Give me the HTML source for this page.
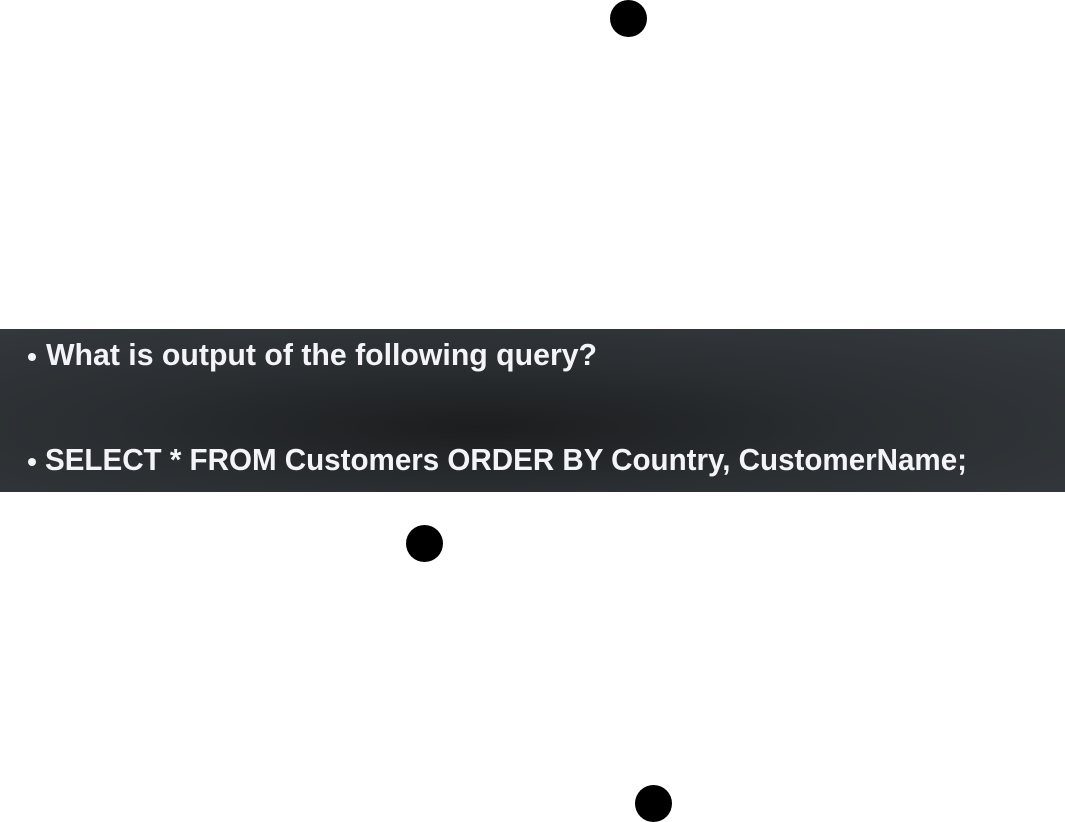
<!DOCTYPE html>
<html><head><style>
html,body{margin:0;padding:0;width:1065px;height:822px;background:#fff;overflow:hidden;position:relative}
.dot{position:absolute;width:37px;height:37px;border-radius:50%;background:#000}
.band{position:absolute;left:0;top:329px;width:1065px;height:163px;background:radial-gradient(ellipse at 45% 60%,#1c1d1f 0%,#2a2e31 45%,#353a3e 100%)}
.t{position:absolute;color:#f4f4f8;font-family:"Liberation Sans",sans-serif;font-weight:bold;font-size:31px;white-space:nowrap;transform-origin:left top}
.b{position:absolute;width:8px;height:8px;border-radius:50%;background:#f4f4f8}
</style></head><body>
<div class="dot" style="left:610px;top:0px"></div>
<div class="dot" style="left:406px;top:525px"></div>
<div class="dot" style="left:635px;top:785px"></div>
<div class="band">
<div class="b" style="left:28px;top:24px"></div>
<div class="t" id="a" style="left:46px;top:8px">What is output of the following query?</div>
<div class="b" style="left:28px;top:129px"></div>
<div class="t" id="c" style="left:45px;top:113px">SELECT * FROM Customers ORDER BY Country, CustomerName;</div>
</div>
<script>
function fit(id,w){var e=document.getElementById(id);e.style.transform='none';var r=e.getBoundingClientRect().width;e.style.transform='scaleX('+(w/r)+')';}
fit('a',551);fit('c',922);
</script>
</body></html>
